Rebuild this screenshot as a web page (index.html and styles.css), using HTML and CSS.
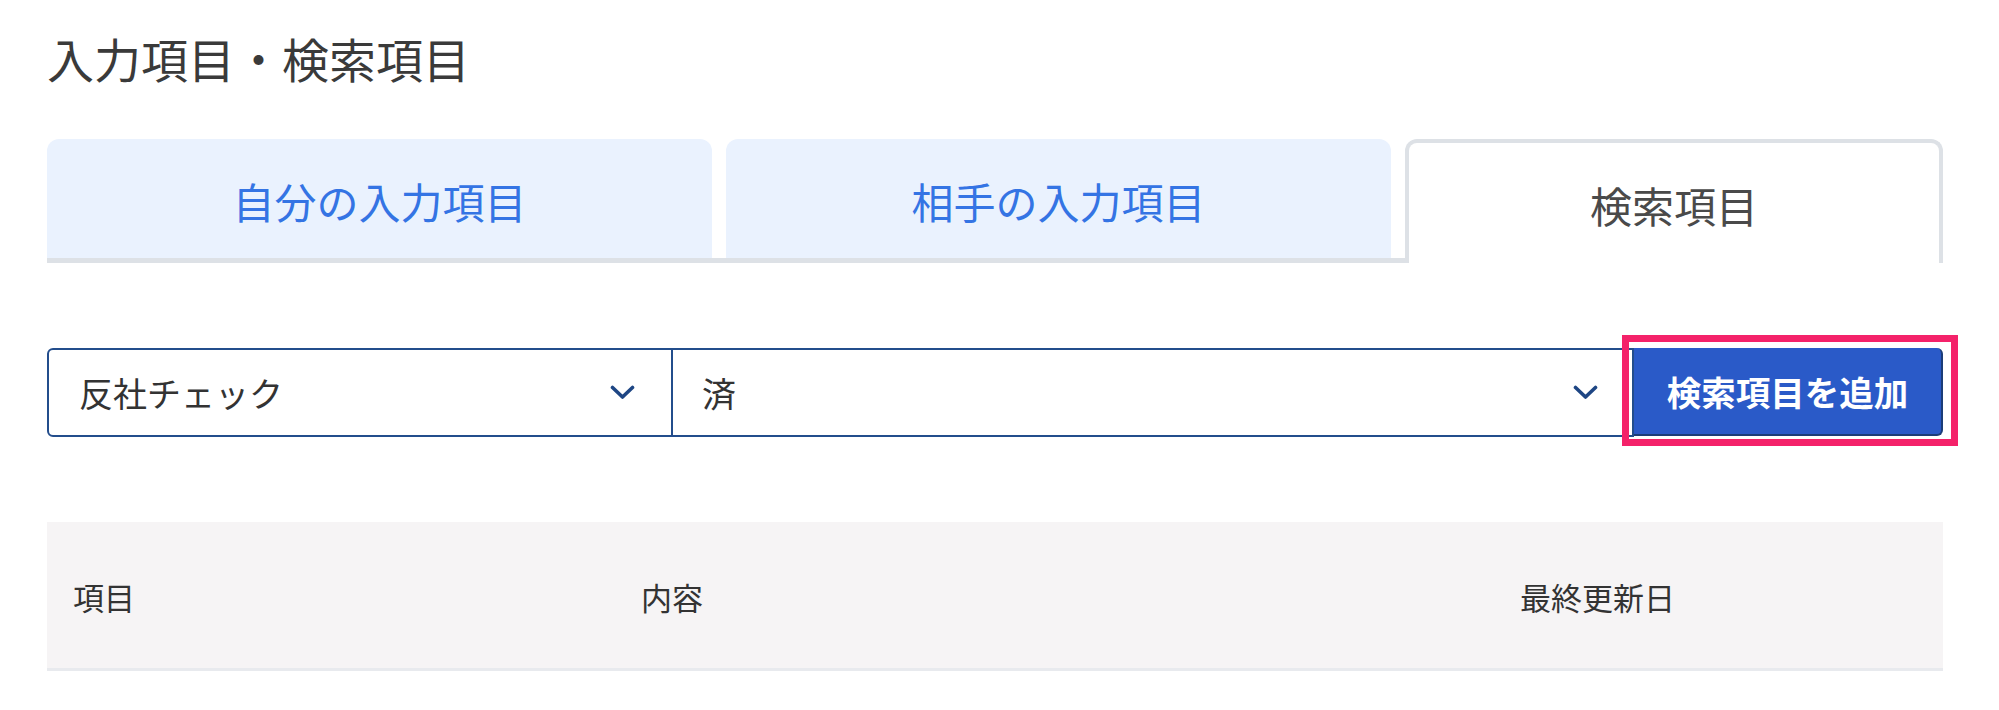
FILE: index.html
```html
<!DOCTYPE html>
<html lang="ja">
<head>
<meta charset="utf-8">
<title>入力項目・検索項目</title>
<link rel="stylesheet" href="styles.css">
</head>
<body>
<main class="page">
  <h1 class="title">入力項目・検索項目</h1>

  <nav class="tabs">
    <div class="tab tab-wide">自分の入力項目</div>
    <div class="tab tab-wide">相手の入力項目</div>
    <div class="tab tab-active">検索項目</div>
  </nav>

  <div class="search-row">
    <div class="select select-item">
      <span class="select-text">反社チェック</span>
      <svg class="chevron" viewBox="0 0 25 15" width="25" height="15"><polyline points="2.5,2.5 12.5,12 22.5,2.5" fill="none" stroke="#1e4684" stroke-width="3.6" stroke-linecap="round" stroke-linejoin="round"/></svg>
    </div>
    <div class="select select-value">
      <span class="select-text">済</span>
      <svg class="chevron" viewBox="0 0 25 15" width="25" height="15"><polyline points="2.5,2.5 12.5,12 22.5,2.5" fill="none" stroke="#1e4684" stroke-width="3.6" stroke-linecap="round" stroke-linejoin="round"/></svg>
    </div>
    <div class="add-wrap">
      <button class="add-btn" type="button">検索項目を追加</button>
    </div>
  </div>

  <div class="table-head">
    <div class="col col-item">項目</div>
    <div class="col col-content">内容</div>
    <div class="col col-date">最終更新日</div>
  </div>
</main>
</body>
</html>
```

FILE: styles.css
```css
* {
  box-sizing: border-box;
}

html, body {
  margin: 0;
  padding: 0;
  background: #ffffff;
}

body {
  font-family: "Noto Sans CJK JP", "Noto Sans", sans-serif;
  color: #333333;
}

.page {
  width: 1896px;
  margin-left: 47px;
}

.title {
  margin: 34px 0 0 0;
  height: 48px;
  font-size: 47px;
  line-height: 48px;
  font-weight: 400;
  color: #3a3a3a;
  letter-spacing: 0;
}

/* Tabs */
.tabs {
  margin-top: 57px;
  display: flex;
  gap: 14px;
  height: 124px;
  border-bottom: 5px solid #dde1e6;
}

.tab {
  display: flex;
  align-items: center;
  justify-content: center;
  font-size: 42px;
  border-radius: 12px 12px 0 0;
}

.tab-wide {
  flex: 0 0 665px;
  background: #eaf2fe;
  color: #3474e4;
  padding-top: 4px;
}

.tab-active {
  flex: 0 0 538px;
  height: 124px;
  background: #ffffff;
  border: 4px solid #dde1e6;
  border-bottom: none;
  color: #4a4a4a;
  padding-top: 2px;
}

/* Search row */
.search-row {
  margin-top: 85px;
  display: flex;
  height: 89px;
}

.select {
  display: flex;
  align-items: center;
  justify-content: space-between;
  height: 89px;
  border: 2px solid #234d8c;
  background: #ffffff;
  font-size: 34px;
  color: #333333;
}

.select-item {
  flex: 0 0 626px;
  border-radius: 6px 0 0 6px;
  padding: 0 36px 0 30px;
}

.select-value {
  flex: 0 0 961px;
  border-left: none;
  padding: 0 34px 0 29px;
}

.select-text {
  line-height: 1;
}

.chevron {
  display: block;
  flex: 0 0 auto;
}

.add-wrap {
  position: relative;
  flex: 0 0 309px;
  height: 89px;
}

.add-wrap::after {
  content: "";
  position: absolute;
  left: -12px;
  top: -13px;
  right: -15px;
  bottom: -9px;
  border: 7px solid #f4226a;
  pointer-events: none;
}

.add-btn {
  width: 100%;
  height: 88px;
  margin: 0;
  border: none;
  border-right: 2px solid #1c3d78;
  border-bottom: 2px solid #1c3d78;
  border-radius: 0 6px 6px 0;
  background: #2a5ac8;
  color: #ffffff;
  font-family: "Noto Sans CJK JP", "Noto Sans", sans-serif;
  font-size: 34.5px;
  font-weight: 700;
  line-height: 1;
  padding: 0;
}

/* Table header */
.table-head {
  margin-top: 85px;
  display: flex;
  align-items: center;
  height: 149px;
  background: #f6f4f5;
  border-bottom: 3px solid #e8eaee;
  font-size: 31px;
  color: #333333;
}

.col {
  padding-left: 26px;
  padding-top: 2px;
}

.col-item {
  flex: 0 0 568px;
}

.col-content {
  flex: 0 0 879px;
}

.col-date {
  flex: 1 1 auto;
}
```
